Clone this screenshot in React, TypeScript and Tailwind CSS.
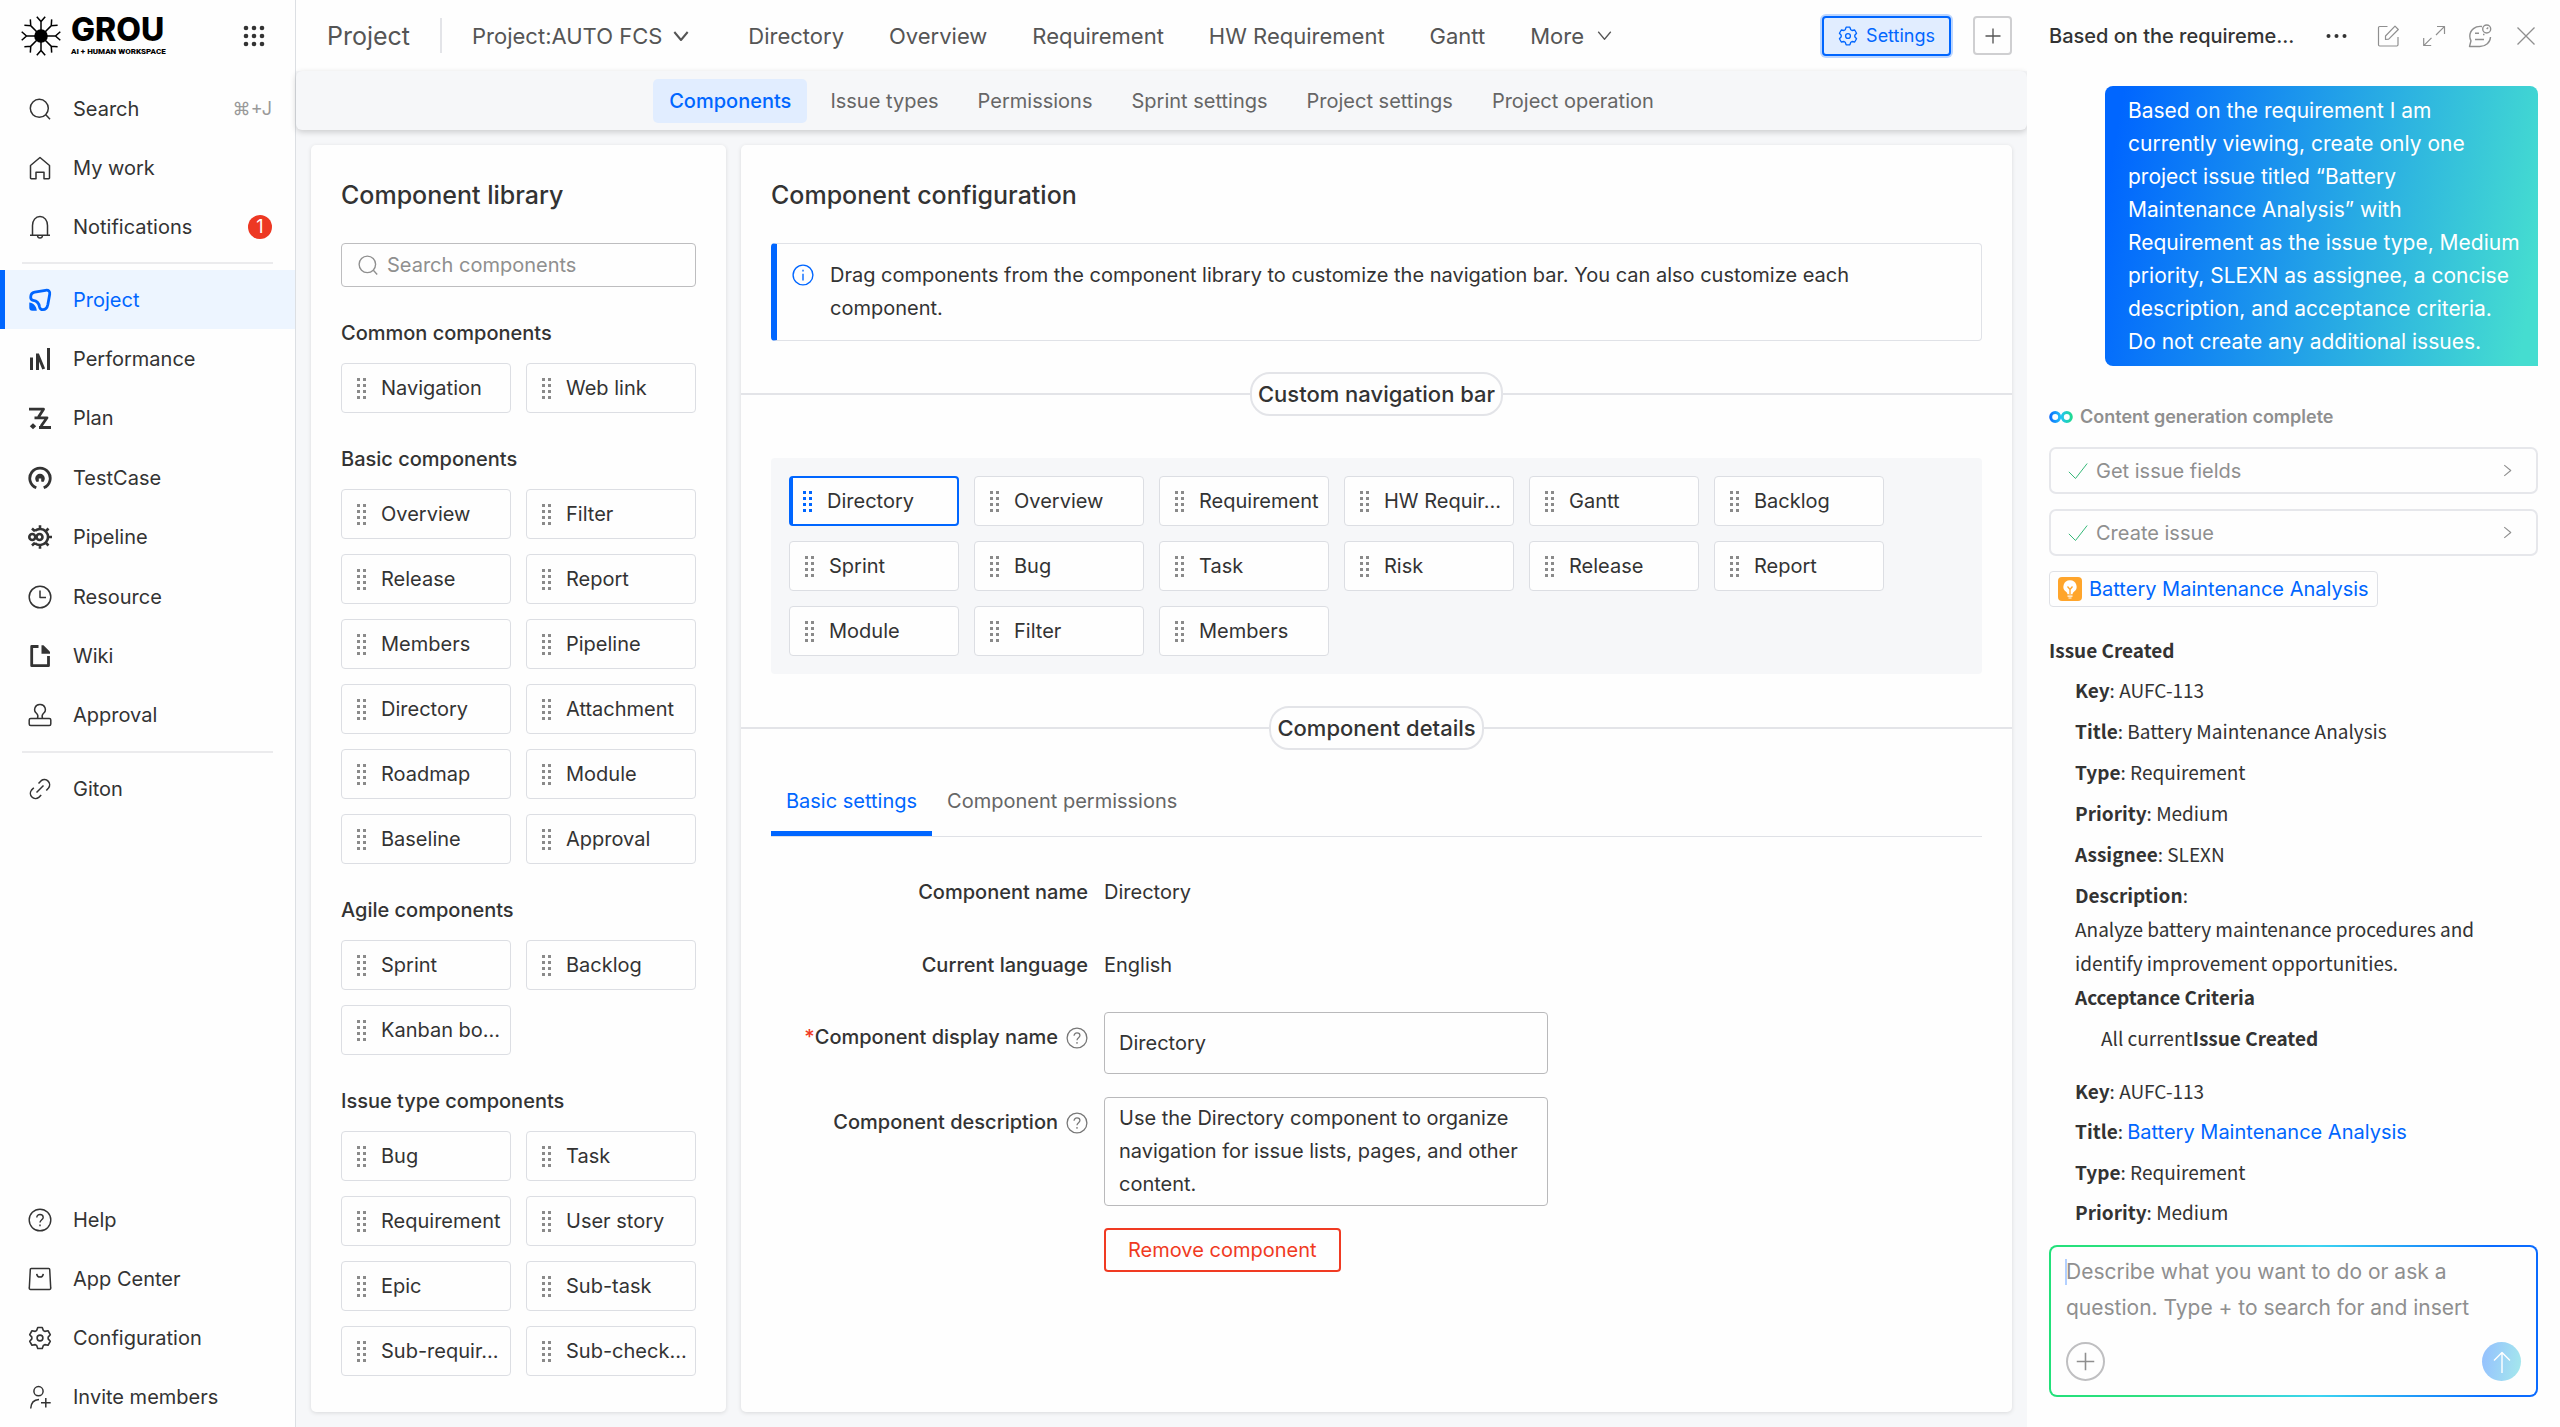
import type { ReactNode } from "react";

const gear = (outer: number, inner: number) => {
  const pts: string[] = [];
  for (let i = 0; i < 6; i++) {
    const steps: [number, number][] = [[-24, inner], [-12, outer], [12, outer], [24, inner]];
    steps.forEach(([off, r]) => {
      const a = ((i * 60 - 90 + off) * Math.PI) / 180;
      pts.push(`${(12 + r * Math.cos(a)).toFixed(2)} ${(12 + r * Math.sin(a)).toFixed(2)}`);
    });
  }
  return `M${pts.join("L")}Z`;
};

function Svg({ children, className = "size-6", width = 1.5 }: { children: ReactNode; className?: string; width?: number }) {
  return (
    <svg
      viewBox="0 0 24 24"
      className={`shrink-0 ${className}`}
      fill="none"
      stroke="currentColor"
      strokeWidth={width}
      strokeLinejoin="round"
      aria-hidden="true"
    >
      {children}
    </svg>
  );
}

const SearchIcon = ({ className }: { className?: string }) => (
  <Svg className={className}>
    <circle cx="11.3" cy="11.3" r="9" />
    <path d="M17.8 17.8 22 22.3" />
  </Svg>
);

const GearIcon = ({ className }: { className?: string }) => (
  <Svg className={className} width={1.6}>
    <path d={gear(10.8, 8.2)} />
    <circle cx="12" cy="12" r="2.9" />
  </Svg>
);

const HelpIcon = ({ className }: { className?: string }) => (
  <Svg className={className} width={1.4}>
    <circle cx="12" cy="12" r="10.8" />
    <path d="M8.8 9.6c0-1.9 1.4-3.1 3.2-3.1s3.2 1.2 3.2 2.9c0 2.2-3.2 2.5-3.2 5.1M12 16.4v1.9" />
  </Svg>
);

const PlusIcon = ({ className }: { className?: string }) => (
  <Svg className={className} width={1.8}>
    <path d="M12 2v20M2 12h20" />
  </Svg>
);

const ChevronIcon = ({ className, width = 2 }: { className?: string; width?: number }) => (
  <Svg className={className} width={width}>
    <path d="m2 6 10 12L22 6" />
  </Svg>
);

const icons: Record<string, ReactNode> = {
  Search: <SearchIcon />,
  "My work": (
    <Svg>
      <path d="M2.5 9.5 12 1.5l9.5 8V22a.8.8 0 0 1-.8.8H16v-6.5H8v6.5H3.3a.8.8 0 0 1-.8-.8Z" />
    </Svg>
  ),
  Notifications: (
    <Svg>
      <path d="M4.5 20V10.5C4.5 5.5 7.5 1.5 12 1.5s7.5 4 7.5 9V20M2 20.2h20M9.5 20.5c.2 1.8 1.2 2.5 2.5 2.5s2.3-.7 2.5-2.5" />
    </Svg>
  ),
  Project: (
    <Svg width={2.8}>
      <path d="M2.7 9.2c0-3.2 1.3-4.5 4-5L17.5 2.3c3.2-.5 4.7 1 4.2 4l-1.900 10.5c-.7 3.4-2.3 4.9-4.9 4.9-2.2 0-3-.9-3.4-3C10.9 15 9 13 5.2 12.4c-1.7-.3-2.5-1.3-2.5-3.2Z" />
      <path stroke="none" fill="currentColor" d="M1.3 14.5c4 .3 7.2 3.5 7.5 8.3H4.3c-2 0-3-1-3-3Z" />
    </Svg>
  ),
  Performance: (
    <Svg width={3}>
      <path d="M3.5 10.5V23M9.5 23V6.5M9.5 7l6.2 15M20.5 1v22" />
    </Svg>
  ),
  Plan: (
    <Svg width={2.8}>
      <path d="M1 3.2h14.5L10.5 11M6.5 11.8H19l-6 8.5M11 21.5h12" />
      <path stroke="none" fill="currentColor" d="m5 17.3 3.2 3-3.2 3-3.2-3Z" />
    </Svg>
  ),
  TestCase: (
    <Svg width={2.8}>
      <path d="M8.3 21.8A10.2 10.2 0 1 1 15.7 21.8" />
      <path stroke="none" fill="currentColor" d="M8.6 16A4.8 4.8 0 1 1 15.4 16L13.2 15.5V12.5h-2.4v3Z" />
    </Svg>
  ),
  Pipeline: (
    <Svg width={2.6}>
      <circle cx="4.3" cy="12" r="3" />
      <circle cx="11.5" cy="12" r="3" />
      <path d="M7 5.8a8 8 0 1 1 0 12.4M12 4.5V.2M12 23.8v-4.3M20 12h4M17.5 6.5l3-3M17.5 17.5l3 3M7 6.3 4 3.5M7 17.7l-3 2.8" />
    </Svg>
  ),
  Resource: (
    <Svg>
      <circle cx="12" cy="12" r="10.8" />
      <path d="M12 5.5V12.5h6" />
    </Svg>
  ),
  Wiki: (
    <Svg width={2.8}>
      <path d="M10.5 2.5H3.7V21.7H20.5V12" />
      <path stroke="none" fill="currentColor" d="M13.5 1.2h2l6.5 6.5v2h-8.5Z" />
    </Svg>
  ),
  Approval: (
    <Svg>
      <rect x="1.2" y="15.5" width="21.6" height="7" rx="1.5" />
      <path d="M9.5 15.5c.8-2.4.5-3.8-.8-5A5 5 0 0 1 12 1.5a5 5 0 0 1 3.3 9c-1.3 1.2-1.6 2.6-.8 5" />
    </Svg>
  ),
  Giton: (
    <Svg>
      <path d="M8.5 15.5l7-7M10.5 6.5l2.7-2.8a5.2 5.2 0 0 1 7.3 7.3l-2.2 2.4M5.8 10.8l-2.3 2.3a5.2 5.2 0 0 0 7.3 7.3l2.4-2.4" />
    </Svg>
  ),
  Help: <HelpIcon />,
  "App Center": (
    <Svg>
      <path d="M3.3 1.5h17.4a1 1 0 0 1 1 1l1 18.5a1.2 1.2 0 0 1-1.2 1.4h-19A1.2 1.2 0 0 1 1.3 21l1-18.5a1 1 0 0 1 1-1ZM8.7 6.8c.3 2.2 1.5 3.3 3.3 3.3s3-1.1 3.3-3.3" />
    </Svg>
  ),
  Configuration: <GearIcon />,
  "Invite members": (
    <Svg>
      <circle cx="10.5" cy="6.2" r="4.6" />
      <path d="M2.7 23.5c.3-5.5 3.6-8.8 8.3-9M17.8 13v9.5M13 17.8h9.7" />
    </Svg>
  ),
};

const mainNav = ["Project", "Performance", "Plan", "TestCase", "Pipeline", "Resource", "Wiki", "Approval"];
const bottomNav = ["Help", "App Center", "Configuration", "Invite members"];

const library = [
  { title: "Common components", items: ["Navigation", "Web link"] },
  {
    title: "Basic components",
    items: [
      "Overview", "Filter", "Release", "Report", "Members", "Pipeline",
      "Directory", "Attachment", "Roadmap", "Module", "Baseline", "Approval",
    ],
  },
  { title: "Agile components", items: ["Sprint", "Backlog", "Kanban bo..."] },
  {
    title: "Issue type components",
    items: ["Bug", "Task", "Requirement", "User story", "Epic", "Sub-task", "Sub-requir...", "Sub-check..."],
  },
];

const navBarItems = [
  "Directory", "Overview", "Requirement", "HW Requir...", "Gantt", "Backlog",
  "Sprint", "Bug", "Task", "Risk", "Release", "Report",
  "Module", "Filter", "Members",
];

const prompt = `Based on the requirement I am
currently viewing, create only one
project issue titled “Battery
Maintenance Analysis” with
Requirement as the issue type, Medium
priority, SLEXN as assignee, a concise
description, and acceptance criteria.
Do not create any additional issues.`;

function NavItem({ label, active, children }: { label: string; active?: boolean; children?: ReactNode }) {
  return (
    <a
      href="#"
      className={
        active
          ? "flex items-center min-h-[59px] pl-7 pr-[23px] bg-[#edf5ff] text-[#0066ff] shadow-[inset_5px_0_0_#0066ff]"
          : "flex items-center min-h-[59px] pl-7 pr-[23px]"
      }
    >
      {icons[label]}
      <span className="ml-[21px] flex-1">{label}</span>
      {children}
    </a>
  );
}

function Sidebar() {
  return (
    <aside className="w-[296px] shrink-0 flex flex-col bg-[#fefefe] border-r border-[#dcdfe3]">
      <div className="h-[71px] flex items-center pl-[21px] pr-[30px]">
        <svg viewBox="-20 -20 40 40" className="size-10" stroke="#000" strokeWidth="1.5" fill="none" aria-hidden="true">
          <circle r="6.8" fill="#000" stroke="none" />
          {[0, 45, 90, 135, 180, 225, 270, 315].map((a) => (
            <path key={a} transform={`rotate(${a})`} d="M0 -6V-15M-4.2 -19.3L0 -14.5L4.2 -19.3" />
          ))}
        </svg>
        <div className="ml-[10px] flex-1 text-black">
          <div className="text-[32px] leading-[28px] font-extrabold">GROU</div>
          <div className="mt-1 text-[8px] leading-[8px] font-black font-[Roboto,sans-serif] whitespace-nowrap">AI + HUMAN WORKSPACE</div>
        </div>
        <button aria-label="Apps">
          <svg viewBox="0 0 22 22" className="size-[22px]" fill="#333" aria-hidden="true">
            {[3, 11, 19].map((y) => [3, 11, 19].map((x) => <circle key={`${x}-${y}`} cx={x} cy={y} r="2.3" />))}
          </svg>
        </button>
      </div>
      <nav className="mt-2 flex flex-col">
        <NavItem label="Search">
          <span className="text-[18px] text-[#999]">⌘+J</span>
        </NavItem>
        <NavItem label="My work" />
        <NavItem label="Notifications">
          <span className="size-6 rounded-full bg-[#ed3823] text-white text-[18px] flex items-center justify-center">1</span>
        </NavItem>
      </nav>
      <hr className="my-[6px] mx-[22px] border-t-2 border-[#ebebed]" />
      <nav className="grid auto-rows-fr h-[475px]">
        {mainNav.map((l) => (
          <NavItem key={l} label={l} active={l === "Project"} />
        ))}
      </nav>
      <hr className="my-[6px] mx-[22px] border-t-2 border-[#ebebed]" />
      <NavItem label="Giton" />
      <nav className="mt-auto pb-px flex flex-col">
        {bottomNav.map((l) => (
          <NavItem key={l} label={l} />
        ))}
      </nav>
    </aside>
  );
}

function TopBar() {
  return (
    <header className="h-[71px] shrink-0 flex items-center pl-[31px] pr-[15px] bg-[#fefefe] text-[22px] text-[#555] whitespace-nowrap">
      <span className="text-[25px]">Project</span>
      <span className="mx-[30px] w-[2px] h-[35px] bg-[#e3e4e8]" />
      <button className="flex items-center gap-[11px]">
        Project:AUTO FCS
        <ChevronIcon className="size-4" width={3} />
      </button>
      <nav className="ml-[59px] flex items-center gap-[45px]">
        {["Directory", "Overview", "Requirement", "HW Requirement", "Gantt"].map((l) => (
          <a key={l} href="#">{l}</a>
        ))}
        <button className="flex items-center gap-[13px]">
          More
          <ChevronIcon className="size-[15px]" />
        </button>
      </nav>
      <button className="ml-auto h-10 px-[14px] flex items-center gap-2 rounded-[4px] border-2 border-[#0066ff] bg-[#e1edff] ring-2 ring-[#bcd6ff] text-[18px] text-[#0066ff]">
        <GearIcon className="size-5" />
        Settings
      </button>
      <button aria-label="Add" className="ml-[22px] size-[39px] flex items-center justify-center rounded-[4px] border-2 border-[#cfcfd1]">
        <PlusIcon className="size-[18px]" />
      </button>
    </header>
  );
}

function SubNav() {
  const tabs = ["Components", "Issue types", "Permissions", "Sprint settings", "Project settings", "Project operation"];
  return (
    <nav className="h-[59px] shrink-0 flex items-center justify-center gap-[7px] rounded-[6px] bg-[#f6f7f9] shadow-[0_2px_6px_rgba(0,0,0,0.18)] text-[#666]">
      {tabs.map((t, i) => (
        <a
          key={t}
          href="#"
          className={
            i === 0
              ? "h-11 px-4 flex items-center rounded-[5px] bg-[#e1edff] text-[#0066ff] font-medium"
              : "h-11 px-4 flex items-center"
          }
        >
          {t}
        </a>
      ))}
    </nav>
  );
}

function Tile({ label, selected }: { label: string; selected?: boolean }) {
  return (
    <button
      className={
        selected
          ? "h-[50px] w-[170px] pl-[10px] flex items-center gap-[15px] rounded-[4px] border-2 border-l-[4px] border-[#0066ff] bg-[#fefefe] text-left whitespace-nowrap"
          : "h-[50px] w-[170px] pl-[15px] flex items-center gap-[15px] rounded-[4px] border border-[#dcdee3] bg-[#fefefe] text-left whitespace-nowrap"
      }
    >
      <svg viewBox="0 0 9 21" className={selected ? "w-[9px] h-[21px] text-[#0066ff]" : "w-[9px] h-[21px] text-[#8a8a8a]"} fill="currentColor" aria-hidden="true">
        {[0, 6, 12, 18].map((y) => [0, 6].map((x) => <rect key={`${x}-${y}`} x={x} y={y} width="3" height="3" />))}
      </svg>
      {label}
    </button>
  );
}

function Library() {
  return (
    <section className="w-[415px] shrink-0 px-[30px] pt-8 rounded-[5px] bg-[#fefefe] shadow-[0_1px_4px_rgba(0,0,0,0.12)]">
      <h2 className="text-[25px] leading-9 font-medium">Component library</h2>
      <label className="mt-[30px] h-11 px-[15px] flex items-center gap-2 rounded-[4px] border border-[#bdbdbf] text-[#8f8f8f]">
        <SearchIcon className="size-[22px]" />
        <input
          aria-label="Search components"
          placeholder="Search components"
          className="min-w-0 flex-1 outline-none placeholder:text-[#8f8f8f]"
        />
      </label>
      {library.map((g) => (
        <div key={g.title} className="mt-[31px]">
          <h3 className="leading-[30px] font-medium">{g.title}</h3>
          <div className="mt-[15px] grid grid-cols-2 gap-[15px]">
            {g.items.map((l) => (
              <Tile key={l} label={l} />
            ))}
          </div>
        </div>
      ))}
    </section>
  );
}

function SectionTitle({ children }: { children: ReactNode }) {
  return (
    <div className="flex items-center">
      <span className="flex-1 h-[2px] bg-[#e3e4e8]" />
      <h3 className="h-11 px-[6px] flex items-center rounded-[20px] border-2 border-[#e3e4e8] text-[22px] font-medium">{children}</h3>
      <span className="flex-1 h-[2px] bg-[#e3e4e8]" />
    </div>
  );
}

function Label({ children, htmlFor, required, help }: { children: ReactNode; htmlFor?: string; required?: boolean; help?: boolean }) {
  return (
    <label htmlFor={htmlFor} className="w-[317px] mr-4 leading-[33px] flex items-center justify-end font-medium whitespace-nowrap">
      {required && <span className="text-[#f03a22]">*</span>}
      {children}
      {help && <HelpIcon className="ml-2 size-[22px] text-[#777]" />}
    </label>
  );
}

function Configuration() {
  return (
    <section className="flex-1 min-w-0 pt-8 rounded-[5px] bg-[#fefefe] shadow-[0_1px_4px_rgba(0,0,0,0.12)]">
      <h2 className="mx-[30px] text-[25px] leading-9 font-medium">Component configuration</h2>
      <div className="mx-[30px] mt-[30px] mb-[31px] py-[15px] pl-[15px] pr-10 flex gap-4 rounded-[4px] border border-l-[6px] border-[#e0e2e7] border-l-[#0066ff]">
        <Svg className="size-[22px] mt-[5px] text-[#0066ff]">
          <circle cx="12" cy="12" r="10.8" />
          <path d="M12 10.5v7.5M12 6.2v2" />
        </Svg>
        <p className="flex-1 max-w-[1080px] leading-[33px]">
          Drag components from the component library to customize the navigation bar. You can also customize each component.
        </p>
      </div>

      <SectionTitle>Custom navigation bar</SectionTitle>
      <div className="mx-[30px] mt-[42px] mb-8 p-[18px] grid grid-cols-[repeat(6,170px)] gap-[15px] rounded-[4px] bg-[#f6f7f9]">
        {navBarItems.map((l, i) => (
          <Tile key={l} label={l} selected={i === 0} />
        ))}
      </div>

      <SectionTitle>Component details</SectionTitle>
      <div role="tablist" className="mx-[30px] mt-[15px] flex border-b border-[#dfe1e6]">
        <button role="tab" aria-selected="true" className="h-[71px] px-[15px] text-[#0066ff] shadow-[inset_0_-5px_0_#0066ff]">
          Basic settings
        </button>
        <button role="tab" aria-selected="false" className="h-[71px] px-[15px] text-[#666]">
          Component permissions
        </button>
      </div>

      <form className="mx-[30px]">
        <div className="mt-[39px] flex leading-[33px]">
          <Label>Component name</Label>
          Directory
        </div>
        <div className="mt-10 flex leading-[33px]">
          <Label>Current language</Label>
          English
        </div>
        <div className="mt-[30px] flex items-start">
          <div className="pt-[9px]">
            <Label htmlFor="display-name" required help>Component display name</Label>
          </div>
          <input
            id="display-name"
            defaultValue="Directory"
            className="w-[444px] h-[62px] px-[14px] rounded-[4px] border border-[#b9b9bb] outline-none"
          />
        </div>
        <div className="mt-[23px] flex items-start">
          <div className="pt-[9px]">
            <Label htmlFor="description" help>Component description</Label>
          </div>
          <textarea
            id="description"
            rows={3}
            defaultValue="Use the Directory component to organize navigation for issue lists, pages, and other content."
            className="block w-[444px] px-[14px] py-1 leading-[33px] rounded-[4px] border border-[#b9b9bb] outline-none resize-none overflow-hidden"
          />
        </div>
        <button type="button" className="mt-[22px] ml-[333px] h-11 px-[22px] rounded-[4px] border-2 border-[#f03a22] text-[#f03a22]">
          Remove component
        </button>
      </form>
    </section>
  );
}

function Field({ name, children }: { name: string; children?: ReactNode }) {
  return (
    <p>
      <strong className="font-bold">{name}</strong>: {children}
    </p>
  );
}

function ToolStep({ label }: { label: string }) {
  return (
    <button className="mt-[15px] w-full h-[47px] pl-[17px] pr-[22px] flex items-center rounded-[7px] border-2 border-[#e6e7eb] text-[#8f8f8f]">
      <Svg className="size-5 text-[#35b878]" width={1.2}>
        <path d="m1 13 8 8L23 3" />
      </Svg>
      <span className="ml-2 flex-1 text-left">{label}</span>
      <ChevronIcon className="size-[13px] -rotate-90" width={2} />
    </button>
  );
}

function Assistant() {
  return (
    <aside className="relative w-[533px] shrink-0 px-[22px] flex flex-col bg-[#fefefe]">
      <header className="h-[71px] shrink-0 flex items-center">
        <h2 className="flex-1 font-medium">Based on the requireme...</h2>
        <div className="flex items-center gap-[22px] text-[#8f8f8f]">
          <button aria-label="More" className="mr-[5px] text-[#333]">
            <Svg>
              <g fill="currentColor" stroke="none">
                <circle cx="3.5" cy="12" r="2" />
                <circle cx="11.5" cy="12" r="2" />
                <circle cx="19.5" cy="12" r="2" />
              </g>
            </Svg>
          </button>
          <button aria-label="New chat">
            <Svg width={1.2}>
              <path d="M11.5 2.5H3.7a1.2 1.2 0 0 0-1.2 1.2v17.1a1.2 1.2 0 0 0 1.2 1.2h17.1a1.2 1.2 0 0 0 1.2-1.2V13M9.5 15.5V12L19 2.2l3.3 3.3-9.6 9.7Z" />
            </Svg>
          </button>
          <button aria-label="Expand">
            <Svg width={1.2}>
              <path d="M15 2.5h7.5V10M22.3 2.7l-8.3 8.3M1.7 14v7.5h7.5M2 21.3l7.5-7.5" />
            </Svg>
          </button>
          <button aria-label="History">
            <Svg width={1.4}>
              <path d="M14 2.5C7.5 1.5 1.8 6 1.8 12.3c0 2 .5 3.2 1.2 4.5L1.5 22.5h10.3c6 0 10.5-4 10.7-9.5M7 9.2h4M7 15.5h9M15 10.5h1.5" />
              <circle cx="18.7" cy="5" r="4" />
              <path d="m18.7 5 1.5-1.5" />
            </Svg>
          </button>
          <button aria-label="Close">
            <Svg width={1.3}>
              <path d="m3.5 3.5 17 17M20.5 3.5l-17 17" />
            </Svg>
          </button>
        </div>
      </header>

      <div className="flex-1 min-h-0 overflow-hidden">
        <div className="mt-[15px] ml-14 pl-[23px] py-2 text-[21px] leading-[33px] text-white whitespace-pre rounded-[8px] rounded-br-none bg-[linear-gradient(100deg,#0066ff_4%,#45ddd0_96%)]">
          {prompt}
        </div>
        <div className="mt-9 flex items-center gap-[7px] text-[18px] leading-[30px] font-semibold text-[#8f8f8f]">
          <svg viewBox="0 0 24 12" className="w-6 h-3" fill="none" strokeWidth="3" aria-hidden="true">
            <defs>
              <linearGradient id="loop" gradientUnits="userSpaceOnUse" x1="0" y1="0" x2="24" y2="0">
                <stop offset="0" stopColor="#0a66ff" />
                <stop offset="0.5" stopColor="#22c3f5" />
                <stop offset="1" stopColor="#1fdc86" />
              </linearGradient>
            </defs>
            <circle cx="6.2" cy="6" r="4.5" stroke="url(#loop)" />
            <circle cx="17.8" cy="6" r="4.5" stroke="url(#loop)" />
          </svg>
          Content generation complete
        </div>
        <ToolStep label="Get issue fields" />
        <ToolStep label="Create issue" />
        <a href="#" className="mt-[15px] h-9 w-fit px-2 flex items-center gap-[7px] rounded-[4px] border border-[#dfe1e6] text-[#0066ff]">
          <svg viewBox="0 0 24 24" className="size-6" aria-hidden="true">
            <rect width="24" height="24" rx="4" fill="#ffa52b" />
            <path d="M12 3.2a6.5 6.5 0 0 0-3.7 11.9c.8.6 1 1.1 1.1 2.2h5.2c.1-1.1.3-1.6 1.1-2.2A6.5 6.5 0 0 0 12 3.2ZM9.5 18.5h5v1.3h-5ZM10.5 20.5h3v1h-3Z" fill="#fff" />
            <path d="m9.5 9.5 2.5 3 2.5-3M12 12.5v4.5" fill="none" stroke="#ffa52b" strokeWidth="1.3" />
          </svg>
          Battery Maintenance Analysis
        </a>
        <div className="mt-[26px] text-[19px] leading-[34px] font-['Noto_Sans_CJK_KR',sans-serif]">
          <p><strong className="font-bold">Issue Created</strong></p>
          <div className="mt-[6px] pl-[26px] flex flex-col gap-[7px]">
            <Field name="Key">AUFC-113</Field>
            <Field name="Title">Battery Maintenance Analysis</Field>
            <Field name="Type">Requirement</Field>
            <Field name="Priority">Medium</Field>
            <Field name="Assignee">SLEXN</Field>
            <div>
              <Field name="Description" />
              <p>Analyze battery maintenance procedures and identify improvement opportunities.</p>
              <p><strong className="font-bold">Acceptance Criteria</strong></p>
            </div>
            <p className="pl-[26px]">
              All current<strong className="font-bold">Issue Created</strong>
            </p>
          </div>
          <div className="mt-[19px] pl-[26px] flex flex-col gap-[6px]">
            <Field name="Key">AUFC-113</Field>
            <Field name="Title">
              <a href="#" className="text-[20px] text-[#0066ff] font-[Inter,sans-serif]">Battery Maintenance Analysis</a>
            </Field>
            <Field name="Type">Requirement</Field>
            <Field name="Priority">Medium</Field>
          </div>
        </div>
      </div>

      <div className="shrink-0 mb-[30px] p-[2px] rounded-[8px] bg-[linear-gradient(90deg,#22e07a_0%,#2fe07f_20%,#3bd5f0_55%,#0a6bff_90%)]">
        <div className="relative px-[15px] pt-[7px] pb-[14px] rounded-[6px] bg-[#fefefe]">
          <span className="absolute left-[14px] top-3 w-[2px] h-[26px] bg-[#b3d0ff]" />
          <textarea
            rows={2}
            aria-label="Message"
            placeholder="Describe what you want to do or ask a question. Type + to search for and insert"
            className="block w-full text-[21px] leading-9 outline-none resize-none overflow-hidden placeholder:text-[#8f8f8f]"
          />
          <div className="mt-4 flex justify-between">
            <button aria-label="Insert" className="size-[39px] flex items-center justify-center rounded-full border-2 border-[#bfbfc1] text-[#8f8f8f]">
              <PlusIcon className="size-[21px]" />
            </button>
            <button aria-label="Send" className="size-[39px] flex items-center justify-center rounded-full bg-[linear-gradient(100deg,#94bfff,#a5e9ec)] text-white">
              <Svg className="size-6" width={1.4}>
                <path d="M12 23V2.5M4 10.5l8-8 8 8" />
              </Svg>
            </button>
          </div>
        </div>
      </div>
    </aside>
  );
}

export default function App() {
  return (
    <div className="flex h-screen overflow-hidden bg-[#f6f7f9] font-[Inter,sans-serif] text-[20px] leading-[30px] text-[#333]">
      <Sidebar />
      <main className="flex-1 min-w-0 flex flex-col">
        <TopBar />
        <SubNav />
        <div className="flex-1 min-h-0 flex gap-[15px] p-[15px]">
          <Library />
          <Configuration />
        </div>
      </main>
      <Assistant />
    </div>
  );
}
